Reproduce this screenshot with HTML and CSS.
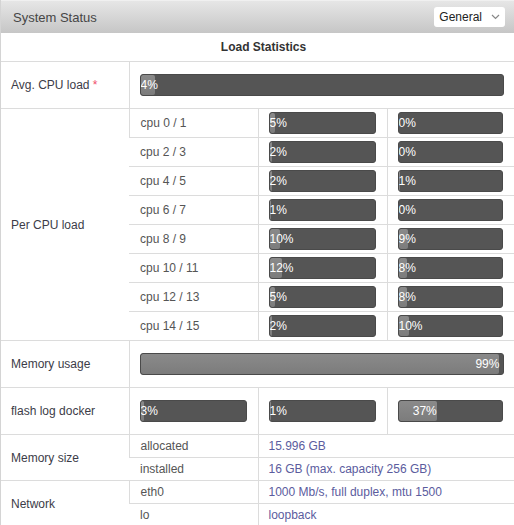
FILE: index.html
```html
<!DOCTYPE html>
<html lang="en">
<head>
    <meta charset="UTF-8">
    <title>System Status</title>
    <link rel="stylesheet" href="styles.css">
</head>
<body>
    <div class="panel">
        <div class="panel-head">
            <span class="panel-title">System Status</span>
            <div class="select">
                <span>General</span>
                <svg width="9" height="6" viewBox="0 0 9 6"><path d="M1 1 L4.5 4.5 L8 1" fill="none" stroke="#888" stroke-width="1.2"/></svg>
            </div>
        </div>
        <table class="stats">
            <colgroup>
                <col class="c1"><col class="c2"><col class="c3"><col class="c4">
            </colgroup>
            <tr class="caption"><th colspan="4">Load Statistics</th></tr>
            <tr class="tall">
                <td class="label">Avg. CPU load <span class="req">*</span></td>
                <td colspan="3" class="barcell"><div class="bar"><div class="fill" style="width:4%">4%</div></div></td>
            </tr>
            <tr class="cpu">
                <td rowspan="8" class="label">Per CPU load</td>
                <td class="sub">cpu 0 / 1</td>
                <td class="barcell split"><div class="bar"><div class="fill" style="width:5%">5%</div></div></td>
                <td class="barcell split"><div class="bar"><div class="fill" style="width:0%">0%</div></div></td>
            </tr>
            <tr class="cpu">
                <td class="sub">cpu 2 / 3</td>
                <td class="barcell split"><div class="bar"><div class="fill" style="width:2%">2%</div></div></td>
                <td class="barcell split"><div class="bar"><div class="fill" style="width:0%">0%</div></div></td>
            </tr>
            <tr class="cpu">
                <td class="sub">cpu 4 / 5</td>
                <td class="barcell split"><div class="bar"><div class="fill" style="width:2%">2%</div></div></td>
                <td class="barcell split"><div class="bar"><div class="fill" style="width:1%">1%</div></div></td>
            </tr>
            <tr class="cpu">
                <td class="sub">cpu 6 / 7</td>
                <td class="barcell split"><div class="bar"><div class="fill" style="width:1%">1%</div></div></td>
                <td class="barcell split"><div class="bar"><div class="fill" style="width:0%">0%</div></div></td>
            </tr>
            <tr class="cpu">
                <td class="sub">cpu 8 / 9</td>
                <td class="barcell split"><div class="bar"><div class="fill" style="width:10%">10%</div></div></td>
                <td class="barcell split"><div class="bar"><div class="fill" style="width:9%">9%</div></div></td>
            </tr>
            <tr class="cpu">
                <td class="sub">cpu 10 / 11</td>
                <td class="barcell split"><div class="bar"><div class="fill" style="width:12%">12%</div></div></td>
                <td class="barcell split"><div class="bar"><div class="fill" style="width:8%">8%</div></div></td>
            </tr>
            <tr class="cpu">
                <td class="sub">cpu 12 / 13</td>
                <td class="barcell split"><div class="bar"><div class="fill" style="width:5%">5%</div></div></td>
                <td class="barcell split"><div class="bar"><div class="fill" style="width:8%">8%</div></div></td>
            </tr>
            <tr class="cpu">
                <td class="sub">cpu 14 / 15</td>
                <td class="barcell split"><div class="bar"><div class="fill" style="width:2%">2%</div></div></td>
                <td class="barcell split"><div class="bar"><div class="fill" style="width:10%">10%</div></div></td>
            </tr>
            <tr class="tall">
                <td class="label">Memory usage</td>
                <td colspan="3" class="barcell"><div class="bar"><div class="fill" style="width:99%">99%</div></div></td>
            </tr>
            <tr class="tall">
                <td class="label">flash log docker</td>
                <td class="barcell split"><div class="bar"><div class="fill" style="width:3%">3%</div></div></td>
                <td class="barcell split"><div class="bar"><div class="fill" style="width:1%">1%</div></div></td>
                <td class="barcell split"><div class="bar"><div class="fill" style="width:37%">37%</div></div></td>
            </tr>
            <tr class="info">
                <td rowspan="2" class="label">Memory size</td>
                <td class="sub">allocated</td>
                <td colspan="2" class="value">15.996 GB</td>
            </tr>
            <tr class="info">
                <td class="sub">installed</td>
                <td colspan="2" class="value">16 GB (max. capacity 256 GB)</td>
            </tr>
            <tr class="info">
                <td rowspan="2" class="label">Network</td>
                <td class="sub">eth0</td>
                <td colspan="2" class="value">1000 Mb/s, full duplex, mtu 1500</td>
            </tr>
            <tr class="info">
                <td class="sub">lo</td>
                <td colspan="2" class="value">loopback</td>
            </tr>
        </table>
    </div>
</body>
</html>
```

FILE: styles.css
```css
body {
    margin: 0;
    font-family: "Liberation Sans", Arial, sans-serif;
    font-size: 12px;
    color: #444;
    background: #fff;
}
.panel {
    width: 514px;
    border-left: 1px solid #d4d4d4;
    box-sizing: border-box;
}
.panel-head {
    height: 33px;
    display: flex;
    align-items: center;
    justify-content: space-between;
    padding: 0 9px 0 12px;
    box-sizing: border-box;
    background: linear-gradient(#e6e6e6, #c6c6c6);
    border-top: 1px solid #f0f0f0;
}
.panel-title {
    font-size: 13px;
    color: #464646;
}
.select {
    display: flex;
    align-items: center;
    gap: 9px;
    height: 20px;
    padding: 0 5px 0 5px;
    background: #fff;
    border-radius: 3px;
    color: #222;
    font-size: 12px;
    box-sizing: border-box;
}
.stats {
    width: 513px;
    border-collapse: collapse;
    table-layout: fixed;
}
.c1 { width: 128px; }
.c2, .c3 { width: 129px; }
.c4 { width: 127px; }
.stats th, .stats td {
    border-top: 1px solid #dcdcdc;
    border-left: 1px solid #dcdcdc;
    padding: 0 10px;
    text-align: left;
    font-weight: normal;
}
.stats tr > :first-child { border-left: none; }
.caption th {
    border-top: none;
    height: 28px;
    padding-left: 22px;
    text-align: center;
    font-weight: bold;
    color: #333;
}
.tall td { height: 46px; }
.cpu td { height: 28px; }
.info td { height: 22px; }
.label { color: #3c3c48; }
.req { color: #f0506e; }
.stats td.sub { color: #555; padding-left: 11px; }
.value { color: #5b5c9e; }
.stats td.split { padding-right: 11px; }
.bar {
    height: 22px;
    background: #555;
    border: 1px solid #4a4a4a;
    border-radius: 3px;
    box-sizing: border-box;
    overflow: hidden;
}
.fill {
    height: 100%;
    background: linear-gradient(#8a8a8a, #7c7c7c);
    border-radius: 2px;
    color: #fff;
    text-align: right;
    white-space: nowrap;
    line-height: 20px;
    font-size: 12px;
}
.barcell .bar { width: 100%; }
```
